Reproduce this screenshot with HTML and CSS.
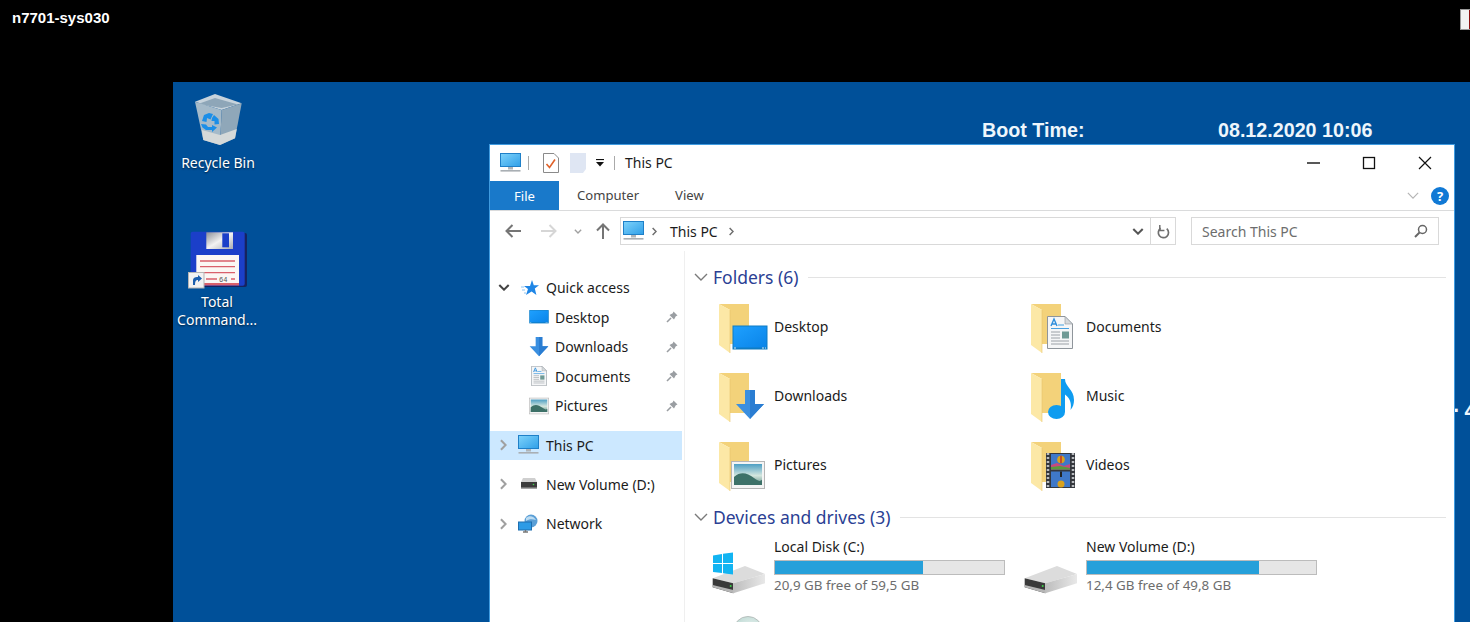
FILE: index.html
```html
<!DOCTYPE html>
<html lang="en">
<head>
<meta charset="utf-8">
<title>n7701-sys030</title>
<link rel="stylesheet" href="styles.css">
</head>
<body>
<svg class="defs" width="0" height="0" aria-hidden="true">
  <defs>
    <linearGradient id="g-screen" x1="0" y1="0" x2="1" y2="1"><stop offset="0" stop-color="#1ea0ff"/><stop offset="1" stop-color="#0a84e8"/></linearGradient>
    <linearGradient id="g-pc" x1="0" y1="0" x2="1" y2="1"><stop offset="0" stop-color="#7fd3fb"/><stop offset="1" stop-color="#2f9fe8"/></linearGradient>
    <linearGradient id="g-drive" x1="0" y1="0" x2="1" y2="0"><stop offset="0" stop-color="#bdbdbd"/><stop offset="1" stop-color="#e8e8e8"/></linearGradient>
    <linearGradient id="g-shutter" x1="0" y1="0" x2="1" y2="1"><stop offset="0" stop-color="#8b8f98"/><stop offset=".5" stop-color="#f2f2f2"/><stop offset="1" stop-color="#a8abb2"/></linearGradient>
    <linearGradient id="g-sky" x1="0" y1="0" x2="0" y2="1"><stop offset="0" stop-color="#4d9fc4"/><stop offset=".55" stop-color="#d4e6de"/><stop offset="1" stop-color="#5f8f86"/></linearGradient>
    <radialGradient id="g-dvd" cx=".6" cy=".5" r=".7"><stop offset="0" stop-color="#eef6f4"/><stop offset="1" stop-color="#b9d6d0"/></radialGradient>

    <symbol id="i-folder" viewBox="0 0 52 54">
      <path d="M1 4H31V44H12V10Z" fill="#f3d27a"/>
      <path d="M1 4L12 10V53L1 45Z" fill="#fce8a6"/>
      <path d="M12 10V53" stroke="#e8c56c" stroke-width=".6"/>
    </symbol>
    <symbol id="i-monitor-blue" viewBox="0 0 36 26">
      <rect x=".5" y=".5" width="35" height="24" fill="#0e7cc4"/>
      <rect x="1.5" y="1.5" width="33" height="21" fill="url(#g-screen)"/>
      <path d="M2 23H34" stroke="#cfe6f5" stroke-width="1" stroke-dasharray="2 26 2 1 2 1"/>
    </symbol>
    <symbol id="i-arrow" viewBox="0 0 28 30">
      <path d="M9 0H19V14H28L14 29L0 14H9Z" fill="#3a8fe0"/>
      <path d="M14 0H19V14H28L14 29Z" fill="#2a7dd2"/>
    </symbol>
    <symbol id="i-picture" viewBox="0 0 34 28">
      <rect x=".5" y=".5" width="33" height="27" fill="#f4f4f4" stroke="#b5b5b5"/>
      <rect x="3" y="3" width="28" height="21" fill="url(#g-sky)"/>
      <path d="M3 16C10 10 16 12 23 17S29 19 31 19V24H3Z" fill="#3d7168"/>
    </symbol>
    <symbol id="i-doc" viewBox="0 0 26 33">
      <path d="M.5.5H18L25.5 8V32.5H.5Z" fill="#f5f6f7" stroke="#8f959b"/>
      <path d="M18 .5V8H25.5Z" fill="#d5d9dc" stroke="#8f959b" stroke-width=".6"/>
      <path d="M4 10L7 3L10 10M5 8H9" fill="none" stroke="#2f8fdc" stroke-width="1.4"/>
      <path d="M11 9H17M4 12.5H22" stroke="#47a0e0" stroke-width="1.2"/>
      <path d="M4 16H13M4 19H13M4 22H13M4 25H22M4 28H22" stroke="#9aa0a6" stroke-width="1"/>
      <rect x="15" y="15.5" width="7" height="7" fill="#6f9a95"/>
    </symbol>
    <symbol id="i-pc" viewBox="0 0 21 20">
      <rect x=".5" y=".5" width="20" height="13" fill="url(#g-pc)" stroke="#1f80c8"/>
      <rect x="8" y="14" width="5" height="2.5" fill="#b0b5b9"/>
      <rect x=".5" y="17" width="20" height="1.6" fill="#a9afb4"/>
    </symbol>
    <symbol id="i-star" viewBox="0 0 18 16">
      <path d="M11 0L12.800 5.200H18L13.800 8.600L15.400 15L10.600 11.600L5 15L7 9L3 6H9Z" fill="#1f86e6"/>
      <path d="M0 7H3M1 10H4M3 13H5" stroke="#8cc4f2" stroke-width="1"/>
    </symbol>
    <symbol id="i-pin" viewBox="0 0 12 12">
      <path d="M7.500 .5L11.500 4.500L9.800 5.200L8 8.500L3.500 4L6.800 2.200Z" fill="#9a9ea2"/>
      <path d="M5 7L1 11" stroke="#9a9ea2" stroke-width="1.600"/>
    </symbol>
    <symbol id="i-chev-d" viewBox="0 0 14 8"><path d="M1 1L7 7L13 1" fill="none" stroke="currentColor" stroke-width="1.400"/></symbol>
    <symbol id="i-chev-d-bold" viewBox="0 0 14 8"><path d="M1.500 1L7 6.500L12.500 1" fill="none" stroke="currentColor" stroke-width="2.400"/></symbol>
    <symbol id="i-chev-r" viewBox="0 0 8 14"><path d="M1 1L7 7L1 13" fill="none" stroke="currentColor" stroke-width="1.600"/></symbol>
    <symbol id="i-chev-r-bold" viewBox="0 0 8 14"><path d="M1 1.500L6.500 7L1 12.500" fill="none" stroke="currentColor" stroke-width="2.400"/></symbol>
    <symbol id="i-arrow-l" viewBox="0 0 16 14"><path d="M7.500 1L1.500 7L7.500 13M2 7H16" fill="none" stroke="currentColor" stroke-width="2"/></symbol>
    <symbol id="i-arrow-u" viewBox="0 0 14 16"><path d="M1 7.500L7 1.500L13 7.500M7 2V16" fill="none" stroke="currentColor" stroke-width="2"/></symbol>
    <symbol id="i-drive" viewBox="0 0 62 48">
      <path d="M.7 28.300L33 16L53 24L21.300 33.300Z" fill="#dcdcdc"/>
      <path d="M.7 28.300L21.300 33.300V43.300L.7 37.300Z" fill="#3a3a3a"/>
      <path d="M.7 35L21.300 40V43.300L.7 37.300Z" fill="#b5b5b5"/>
      <path d="M21.300 33.300L53 24V33.300L21.300 43.300Z" fill="url(#g-drive)"/>
      <circle cx="18.700" cy="36" r="1" fill="#3fd24a"/>
    </symbol>
  </defs>
</svg>

<header class="session-bar">
  <span class="session-name">n7701-sys030</span>
</header>
<button class="session-btn" type="button" aria-label="Session menu"></button>

<main class="desktop">
  <span class="wall-label wall-boot-key">Boot Time:</span>
  <span class="wall-label wall-boot-val">08.12.2020 10:06</span>
  <span class="wall-label wall-edge">· 4</span>

  <div class="shortcut shortcut-bin">
    <svg class="bin-icon" viewBox="0 0 47 52">
      <path d="M0 7.700L20 0L46.700 9.300L26.700 16Z" fill="#c7d3dc"/>
      <path d="M3 10L20 4L43 10.500L26.700 14Z" fill="#8ea6b8"/>
      <path d="M0 7.700L26.700 16L25 51L8.300 46Z" fill="#a5bac9"/>
      <path d="M26.700 16L46.700 9.300L40 44.300L25 51Z" fill="#8fa7b9"/>
      <path d="M6.800 36L25 41L41.800 35L40 44.300L25 51L8.300 46Z" fill="#d5d9d9"/>
      <g fill="#1a8ee8">
        <path d="M7 27L9 21L14 19L18 20L15.500 25.500L12 24L11.500 28Z"/>
        <path d="M19 21L23.500 25L24 30L19.500 30.500L19.500 27L16.500 27L17 24Z"/>
        <path d="M6 30L11 30.500L13 33L17 33L17 31L22 33.500L17 38L17 36L11 36L7.500 33.500Z"/>
      </g>
    </svg>
    <span class="shortcut-label">Recycle Bin</span>
  </div>

  <div class="shortcut shortcut-tc">
    <svg class="tc-icon" viewBox="0 0 62 60">
      <rect x="7" y="3" width="54" height="54" rx="2" fill="#16235f"/>
      <rect x="4.700" y="1.700" width="54" height="54" rx="2" fill="#1b3fc9"/>
      <rect x="20.300" y="2.300" width="26.700" height="16.700" fill="url(#g-shutter)"/>
      <rect x="36.300" y="3.300" width="6.700" height="14" fill="#1b3fc9"/>
      <rect x="10.300" y="25" width="42.700" height="30" fill="#fbf7f4"/>
      <path d="M14 31H49M14 36.700H49M14 42.700H49M20 49H31M45 49H49" stroke="#d9606b" stroke-width="1.300"/>
      <rect x="10.300" y="53" width="42.700" height="2.500" fill="#d9606b"/>
      <text class="tc-64" x="33" y="51.500">64</text>
      <rect x="2.500" y="42.500" width="15.500" height="15.500" fill="#f2f2f2" stroke="#b5b5b5"/>
      <path d="M7 55V50C7 48 9 47 11 47H12V45L16 48.500L12 52V50C10 50 9 51 9 55Z" fill="#1c5fae"/>
    </svg>
    <span class="shortcut-label">Total<br>Command...</span>
  </div>

  <section class="window">
    <div class="titlebar">
      <div class="qat">
        <svg class="qat-pc"><use href="#i-pc"/></svg>
        <span class="qat-sep"></span>
        <svg class="qat-check" viewBox="0 0 16 20">
          <path d="M.5.500H11L15.500 5V19.500H.5Z" fill="#fff" stroke="#8a8a8a"/>
          <path d="M3.500 11L6.500 14.500L12 6.500" fill="none" stroke="#e0622a" stroke-width="1.600"/>
        </svg>
        <svg class="qat-blank" viewBox="0 0 16 20"><path d="M0 0H16V16L13 20H0Z" fill="#dfe6f3"/></svg>
        <svg class="qat-drop" viewBox="0 0 10 8"><path d="M1 .5H9" stroke="#111" stroke-width="1.200"/><path d="M1 3H9L5 7.500Z" fill="#111"/></svg>
        <span class="qat-sep qat-sep-b"></span>
      </div>
      <span class="window-title">This PC</span>
      <div class="win-controls">
        <svg class="win-btn" viewBox="0 0 14 14"><path d="M1 7H14" stroke="#111" stroke-width="1.400"/></svg>
        <svg class="win-btn" viewBox="0 0 14 14"><rect x="1.500" y="1.500" width="11" height="11" fill="none" stroke="#111" stroke-width="1.300"/></svg>
        <svg class="win-btn" viewBox="0 0 14 14"><path d="M1 1L13 13M13 1L1 13" stroke="#111" stroke-width="1.200"/></svg>
      </div>
    </div>

    <div class="ribbon">
      <span class="tab tab-file">File</span>
      <span class="tab tab-computer">Computer</span>
      <span class="tab tab-view">View</span>
      <svg class="ribbon-chev"><use href="#i-chev-d"/></svg>
      <span class="help">?</span>
    </div>

    <div class="navbar">
      <svg class="nav-back"><use href="#i-arrow-l"/></svg>
      <svg class="nav-fwd" viewBox="0 0 16 14"><path d="M8.500 1L14.500 7L8.500 13M0 7H14" fill="none" stroke="currentColor" stroke-width="2"/></svg>
      <svg class="nav-recent"><use href="#i-chev-d-bold"/></svg>
      <svg class="nav-up"><use href="#i-arrow-u"/></svg>
      <div class="address">
        <svg class="addr-pc"><use href="#i-pc"/></svg>
        <svg class="crumb-chev"><use href="#i-chev-r-bold"/></svg>
        <span class="crumb">This PC</span>
        <svg class="crumb-chev crumb-chev-end"><use href="#i-chev-r-bold"/></svg>
        <svg class="addr-drop"><use href="#i-chev-d-bold"/></svg>
        <span class="addr-refresh">
          <svg viewBox="0 0 14 16"><path d="M10.500 5A5.500 5.500 0 1 1 4 4.500" fill="none" stroke="#6f6f6f" stroke-width="1.800"/><path d="M3 1V7H8" fill="none" stroke="#6f6f6f" stroke-width="1.600"/></svg>
        </span>
      </div>
      <div class="search">
        <span class="search-text">Search This PC</span>
        <svg viewBox="0 0 14 14"><circle cx="8.500" cy="5.500" r="4" fill="none" stroke="#666" stroke-width="1.500"/><path d="M5.500 8.500L1 13" stroke="#666" stroke-width="2"/></svg>
      </div>
    </div>

    <div class="panes">
      <nav class="sidebar">
        <ul class="tree tree-quick">
          <li class="tree-row">
            <svg class="twist twist-open"><use href="#i-chev-d-bold"/></svg>
            <svg class="ico-star"><use href="#i-star"/></svg>
            <span>Quick access</span>
          </li>
          <li class="tree-row tree-child">
            <svg class="ico-child ico-desktop"><use href="#i-monitor-blue"/></svg>
            <span class="tree-name">Desktop</span>
            <svg class="pin"><use href="#i-pin"/></svg>
          </li>
          <li class="tree-row tree-child">
            <svg class="ico-child ico-down"><use href="#i-arrow"/></svg>
            <span class="tree-name">Downloads</span>
            <svg class="pin"><use href="#i-pin"/></svg>
          </li>
          <li class="tree-row tree-child">
            <svg class="ico-child ico-docs"><use href="#i-doc"/></svg>
            <span class="tree-name">Documents</span>
            <svg class="pin"><use href="#i-pin"/></svg>
          </li>
          <li class="tree-row tree-child">
            <svg class="ico-child ico-pics"><use href="#i-picture"/></svg>
            <span class="tree-name">Pictures</span>
            <svg class="pin"><use href="#i-pin"/></svg>
          </li>
        </ul>
        <ul class="tree tree-roots">
          <li class="tree-row tree-selected">
            <svg class="twist"><use href="#i-chev-r-bold"/></svg>
            <svg class="ico-root"><use href="#i-pc"/></svg>
            <span>This PC</span>
          </li>
          <li class="tree-row">
            <svg class="twist"><use href="#i-chev-r-bold"/></svg>
            <svg class="ico-root ico-vol" viewBox="0 0 18 12">
              <path d="M3 0H15L17 4H1Z" fill="#cfcfcf"/>
              <rect x="1" y="4" width="16" height="7" fill="#3b3b3b"/>
              <rect x="1" y="9.500" width="16" height="1.500" fill="#a5a5a5"/>
              <circle cx="13.500" cy="6.500" r=".8" fill="#42d24e"/>
            </svg>
            <span>New Volume (D:)</span>
          </li>
          <li class="tree-row">
            <svg class="twist"><use href="#i-chev-r-bold"/></svg>
            <svg class="ico-root" viewBox="0 0 21 20">
              <circle cx="13" cy="7" r="6.500" fill="#5b9fd6"/>
              <path d="M8 4C11 1 16 2 18 6C14 5 11 5 8 7Z" fill="#bcdcf2"/>
              <rect x=".5" y="8" width="13" height="8" fill="#2d9be6" stroke="#1f6fb0"/>
              <path d="M5 18H10M7.500 16V18" stroke="#777" stroke-width="1.400"/>
            </svg>
            <span>Network</span>
          </li>
        </ul>
      </nav>

      <div class="content">
        <div class="group-head group-head-first">
          <svg class="group-chev"><use href="#i-chev-d"/></svg>
          <span class="group-title">Folders (6)</span>
          <span class="group-rule"></span>
        </div>
        <div class="folders">
          <div class="tile">
            <svg class="tile-icon" viewBox="0 0 52 54"><use href="#i-folder" width="52" height="54"/><use href="#i-monitor-blue" x="14" y="25" width="36" height="26"/></svg>
            <span class="tile-name">Desktop</span>
          </div>
          <div class="tile">
            <svg class="tile-icon" viewBox="0 0 52 54"><use href="#i-folder" width="52" height="54"/><use href="#i-doc" x="17" y="16" width="26" height="33"/></svg>
            <span class="tile-name">Documents</span>
          </div>
          <div class="tile">
            <svg class="tile-icon" viewBox="0 0 52 54"><use href="#i-folder" width="52" height="54"/><use href="#i-arrow" x="18" y="21" width="28" height="30"/></svg>
            <span class="tile-name">Downloads</span>
          </div>
          <div class="tile">
            <svg class="tile-icon" viewBox="0 0 52 54">
              <use href="#i-folder" width="52" height="54"/>
              <ellipse cx="26.500" cy="43" rx="8.500" ry="7" fill="#0f9cf0"/>
              <path d="M31 10H35C35 18 44 20 44 31C44 35 43 38 40.500 41C41.500 36 41 30 35 25.500V43H31Z" fill="#0f9cf0"/>
            </svg>
            <span class="tile-name">Music</span>
          </div>
          <div class="tile">
            <svg class="tile-icon" viewBox="0 0 52 54"><use href="#i-folder" width="52" height="54"/><use href="#i-picture" x="13" y="23" width="34" height="28"/></svg>
            <span class="tile-name">Pictures</span>
          </div>
          <div class="tile">
            <svg class="tile-icon" viewBox="0 0 52 54">
              <use href="#i-folder" width="52" height="54"/>
              <rect x="16" y="15" width="29" height="35" fill="#34373d"/>
              <path d="M18 15V50M43 15V50" stroke="#b9bcc0" stroke-width="2.500" stroke-dasharray="2 2"/>
              <rect x="21" y="16" width="19" height="15.500" fill="#3f78c8"/>
              <rect x="21" y="33.500" width="19" height="15.500" fill="#3f78c8"/>
              <path d="M21 31.500V27L27 25L34 28L40 26V31.500Z" fill="#c8487f"/>
              <path d="M21 31.500V29L30 28L40 30V31.500Z" fill="#5a9a3c"/>
              <circle cx="31" cy="21.500" r="3.800" fill="#d9a21e"/>
              <path d="M31 17.700V25.300" stroke="#c0392b" stroke-width="1.600"/>
              <circle cx="31" cy="46" r="3.500" fill="#d9a21e"/>
              <path d="M31 33.500V39" stroke="#222" stroke-width="2"/>
            </svg>
            <span class="tile-name">Videos</span>
          </div>
        </div>

        <div class="group-head group-head-second">
          <svg class="group-chev"><use href="#i-chev-d"/></svg>
          <span class="group-title">Devices and drives (3)</span>
          <span class="group-rule"></span>
        </div>
        <div class="drives">
          <div class="drive">
            <svg class="drive-icon" viewBox="0 0 62 48">
              <use href="#i-drive" width="62" height="48"/>
              <path d="M1 5.500L10 4V13H1ZM11 3.800L21 2.500V13H11ZM1 14H10V23L1 22ZM11 14H21V24.500L11 23.200Z" fill="#12b4f2"/>
            </svg>
            <div class="drive-info">
              <span class="drive-name">Local Disk (C:)</span>
              <span class="meter"><span class="meter-fill" style="width:64.800%"></span></span>
              <span class="drive-free">20,9 GB free of 59,5 GB</span>
            </div>
          </div>
          <div class="drive">
            <svg class="drive-icon"><use href="#i-drive"/></svg>
            <div class="drive-info">
              <span class="drive-name">New Volume (D:)</span>
              <span class="meter"><span class="meter-fill" style="width:75%"></span></span>
              <span class="drive-free">12,4 GB free of 49,8 GB</span>
            </div>
          </div>
          <div class="drive drive-optical">
            <svg class="disc-icon" viewBox="0 0 30 30"><circle cx="15" cy="15" r="14.500" fill="url(#g-dvd)" stroke="#b7bfbd"/></svg>
          </div>
        </div>
      </div>
    </div>
  </section>
</main>
</body>
</html>
```

FILE: styles.css
```css
* { box-sizing: border-box; }

html, body {
  margin: 0;
  height: 622px;
  overflow: hidden;
  background: #000;
}

body {
  display: flex;
  flex-direction: column;
  font-family: "Noto Sans", "Open Sans", sans-serif;
  font-size: 14px;
  color: #1b1b1b;
}

.defs { position: absolute; }

ul { list-style: none; margin: 0; padding: 0; }

.session-bar {
  height: 82px;
  flex: none;
  padding: 8px 0 0 12px;
}

.session-name {
  font-family: "Liberation Sans", Arial, sans-serif;
  font-weight: 700;
  font-size: 15px;
  line-height: 18px;
  color: #fff;
}

.session-btn {
  position: absolute;
  left: 1460px;
  top: 9px;
  width: 20px;
  height: 21px;
  padding: 0;
  background: linear-gradient(90deg, #f2f2f2 0 8px, #8a1010 8px);
  border: 1px solid #999;
}

.desktop {
  position: relative;
  flex: 1;
  margin-left: 173px;
  background: #005099;
  overflow: hidden;
}

.wall-label {
  position: absolute;
  font-family: "Liberation Sans", Arial, sans-serif;
  font-weight: 700;
  font-size: 19.7px;
  line-height: 24px;
  color: #eef6fc;
  white-space: nowrap;
}
.wall-boot-key { left: 809px; top: 36px; }
.wall-boot-val { left: 1045px; top: 36px; }
.wall-edge { left: 1280px; top: 317px; font-size: 22px; word-spacing: -2px; }

.shortcut {
  position: absolute;
  width: 90px;
  display: flex;
  flex-direction: column;
  align-items: center;
  color: #fff;
  text-align: center;
}
.shortcut-bin { left: 0; top: 12px; }
.shortcut-tc { left: -1px; top: 148px; }

.bin-icon { width: 47px; height: 52px; margin-left: 1px; display: block; }
.tc-icon { width: 62px; height: 60px; display: block; }

.shortcut-label {
  font-size: 14px;
  line-height: 19px;
  text-shadow: 0 1px 2px rgba(0, 0, 0, .6);
}
.shortcut-bin .shortcut-label { margin-top: 7px; }
.shortcut-tc .shortcut-label { margin-top: 3px; line-height: 18px; }

.tc-64 {
  font-family: "Liberation Mono", monospace;
  font-size: 7px;
  fill: #555;
}

.window {
  position: absolute;
  left: 316px;
  top: 62px;
  width: 966px;
  height: 500px;
  background: #fff;
  border: 1px solid #3f9be0;
  border-bottom: 0;
  display: flex;
  flex-direction: column;
}

.titlebar {
  height: 36px;
  flex: none;
  display: flex;
  align-items: center;
  padding-left: 10px;
}

.qat { display: flex; align-items: center; }
.qat-pc { width: 21px; height: 20px; }
.qat-sep { width: 1px; height: 14px; background: #aaa; margin-left: 7px; }
.qat-check { width: 16px; height: 20px; margin-left: 14px; }
.qat-blank { width: 16px; height: 20px; margin-left: 11px; }
.qat-drop { width: 10px; height: 8px; margin-left: 9px; }
.qat-sep-b { margin-left: 9px; }

.window-title { margin-left: 10px; margin-bottom: 1px; }

.win-controls {
  margin-left: auto;
  display: flex;
  gap: 42px;
  padding-right: 22px;
}
.win-btn { width: 14px; height: 14px; }

.ribbon {
  height: 30px;
  flex: none;
  display: flex;
  align-items: center;
  border-bottom: 1px solid #dadbdc;
  color: #444;
  font-size: 13.100px;
}

.tab { line-height: 31px; }
.tab-file {
  width: 69px;
  height: 29px;
  background: #1979ca;
  color: #fff;
  text-align: center;
}
.tab-computer { margin-left: 18px; }
.tab-view { margin-left: 36px; }

.ribbon-chev {
  width: 12px;
  height: 7px;
  margin-left: auto;
  color: #b5b5b5;
}

.help {
  width: 18px;
  height: 18px;
  margin: 0 5px 0 12px;
  border-radius: 50%;
  background: #1079d5;
  color: #fff;
  font-weight: 700;
  font-size: 13px;
  line-height: 18px;
  text-align: center;
}

.navbar {
  height: 40px;
  flex: none;
  display: flex;
  align-items: center;
  padding: 0 14px 0 15px;
  color: #444;
  font-size: 14px;
}

.nav-back { width: 16px; height: 14px; color: #757575; }
.nav-fwd { width: 16px; height: 14px; margin-left: 20px; color: #d6d6d6; }
.nav-recent { width: 8px; height: 5px; margin-left: 17px; color: #a0a0a0; }
.nav-up { width: 14px; height: 16px; margin-left: 14px; color: #757575; }

.address {
  width: 556px;
  height: 28px;
  margin-left: 10px;
  display: flex;
  align-items: center;
  border: 1px solid #d9d9d9;
  padding-left: 2px;
}
.addr-pc { width: 21px; height: 20px; }
.crumb-chev { width: 5px; height: 9px; margin-left: 8px; color: #6d6d6d; }
.crumb-chev-end { margin-left: 11px; }
.crumb { margin-left: 13px; color: #1b1b1b; }
.addr-drop { width: 12px; height: 7px; margin-left: auto; margin-right: 6px; color: #555; }

.addr-refresh {
  width: 25px;
  height: 26px;
  display: flex;
  align-items: center;
  justify-content: center;
  border-left: 1px solid #d9d9d9;
}
.addr-refresh svg { width: 13px; height: 15px; }

.search {
  width: 248px;
  height: 28px;
  margin-left: 15px;
  display: flex;
  align-items: center;
  justify-content: space-between;
  border: 1px solid #d9d9d9;
  padding: 0 10px;
  color: #6d6d6d;
}
.search svg { width: 14px; height: 14px; }

.panes {
  flex: 1;
  display: flex;
  min-height: 0;
}

.sidebar {
  width: 195px;
  flex: none;
  padding-top: 22px;
  border-right: 1px solid #efefef;
}

.tree-roots {
  margin-top: 10px;
  display: grid;
  row-gap: 9.700px;
}

.tree-row {
  height: 29.5px;
  display: flex;
  align-items: center;
  padding-left: 8px;
  width: 192px;
}

.tree-child { padding-left: 39px; }
.tree-selected { background: #cce8ff; }

.twist { width: 12px; height: 12px; color: #6d6d6d; }
.twist-open { height: 7px; color: #444; }
.tree-roots .twist { width: 7px; height: 12px; margin-left: 2px; margin-right: 8px; color: #a0a0a0; }

.ico-star { width: 18px; height: 16px; margin-left: 11px; margin-right: 7px; }
.ico-root { width: 21px; height: 20px; margin-left: 3px; margin-right: 7px; }
.ico-vol { width: 18px; height: 12px; margin-left: 5px; margin-right: 8px; }

.ico-child { width: 20px; height: 20px; margin-right: 6px; }
.ico-docs { width: 16px; margin-left: 2px; margin-right: 8px; }

.tree-name { flex: 1; }
.pin { width: 12px; height: 12px; margin-right: 4px; }

.content {
  flex: 1;
  min-width: 0;
  display: flex;
  flex-direction: column;
  padding-right: 8px;
}

.group-head {
  height: 20px;
  flex: none;
  display: flex;
  align-items: center;
  padding-left: 9px;
  color: #2b3f94;
  font-size: 17.500px;
}
.group-head-first { margin-top: 16px; }
.group-head-second { margin-top: 7.5px; }

.group-chev { width: 14px; height: 8px; color: #7a7a7a; }
.group-title { margin-left: 5px; margin-bottom: 1px; }
.group-rule { flex: 1; height: 1px; background: #e3e3e3; margin-left: 9px; margin-top: 1px; }

.folders {
  margin-top: 5.5px;
  padding-left: 33px;
  display: grid;
  grid-template-columns: 312px 312px;
  grid-auto-rows: 69px;
}

.tile {
  display: flex;
  align-items: center;
  gap: 4px;
}
.tile-icon { width: 52px; height: 54px; flex: none; }
.tile-name { margin-bottom: 2px; }

.drives {
  margin-top: 10px;
  padding-left: 27px;
  display: grid;
  grid-template-columns: 312px 312px;
  row-gap: 10px;
}

.drive { display: flex; }
.drive-icon { width: 62px; height: 48px; flex: none; margin-top: 13px; }

.drive-info { width: 231px; display: flex; flex-direction: column; }
.drive-name { line-height: 20px; height: 21px; }
.drive-free { line-height: 20px; color: #6d6d6d; font-size: 13.400px; }

.meter {
  height: 15px;
  margin-top: 2px;
  display: block;
  background: #e6e6e6;
  border: 1px solid #bcbcbc;
}
.meter-fill { display: block; height: 100%; background: #26a0da; }

.drive-optical { padding: 8px 0 0 21px; }
.disc-icon { width: 30px; height: 30px; }
```
